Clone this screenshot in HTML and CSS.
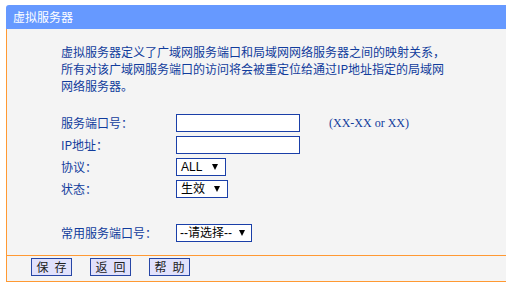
FILE: index.html
```html
<!DOCTYPE html>
<html lang="zh-CN">
<head>
<meta charset="utf-8">
<title>虚拟服务器</title>
<link rel="stylesheet" href="styles.css">
</head>
<body>
<div class="panel">
  <div class="title">虚拟服务器</div>
  <div class="content">
    <p class="intro">虚拟服务器定义了广域网服务端口和局域网网络服务器之间的映射关系，<br>所有对该广域网服务端口的访问将会被重定位给通过IP地址指定的局域网<br>网络服务器。</p>
    <div class="form">
      <div class="label">服务端口号：</div>
      <div class="field"><input class="text" type="text"><span class="hint">(XX-XX or XX)</span></div>
      <div class="label">IP地址：</div>
      <div class="field"><input class="text" type="text"></div>
      <div class="label">协议：</div>
      <div class="field"><div class="select w50"><span class="val">ALL</span><svg class="arrow" width="6" height="6" viewBox="0 0 6 6"><polygon points="0,0 6,0 3,6" fill="#000"/></svg></div></div>
      <div class="label">状态：</div>
      <div class="field"><div class="select w52"><span class="val">生效</span><svg class="arrow" width="6" height="6" viewBox="0 0 6 6"><polygon points="0,0 6,0 3,6" fill="#000"/></svg></div></div>
      <div class="spacer"></div>
      <div class="label">常用服务端口号：</div>
      <div class="field"><div class="select w76"><span class="val">--请选择--</span><svg class="arrow" width="6" height="6" viewBox="0 0 6 6"><polygon points="0,0 6,0 3,6" fill="#000"/></svg></div></div>
    </div>
  </div>
  <div class="footer">
    <button class="btn" type="button"><span>保</span><span>存</span></button>
    <button class="btn" type="button"><span>返</span><span>回</span></button>
    <button class="btn" type="button"><span>帮</span><span>助</span></button>
  </div>
</div>
</body>
</html>
```
FILE: styles.css
```css
html, body {
  margin: 0;
  padding: 0;
  background: #ffffff;
  overflow: hidden;
}

body {
  font-family: "Noto Sans CJK SC", "Liberation Sans", sans-serif;
  font-size: 12px;
  color: #113c9c;
}

.panel {
  margin: 5px 0 0 6px;
}

.title {
  height: 24px;
  line-height: 24px;
  background: #6699ff;
  color: #ffffff;
  border-top-left-radius: 3px;
  padding-left: 7px;
}

.content {
  box-sizing: border-box;
  height: 226px;
  background: #f4f4f4;
  border-left: 1px solid #ff9933;
  padding: 14px 0 0 54px;
}

.intro {
  margin: 0;
  line-height: 17px;
  white-space: nowrap;
}

.form {
  margin-top: 20px;
  display: grid;
  grid-template-columns: 115px auto;
  grid-auto-rows: 18px;
  row-gap: 4px;
  align-items: center;
}

.spacer {
  grid-column: 1 / 3;
}

.label {
  white-space: nowrap;
  line-height: 18px;
}

.field {
  display: flex;
  align-items: center;
  height: 18px;
}

.text {
  box-sizing: border-box;
  width: 124px;
  height: 18px;
  margin: 0;
  padding: 0 2px;
  border: 1px solid #1a3fa8;
  background: #ffffff;
  outline: none;
}

.hint {
  margin-left: 29px;
  font-family: "Liberation Serif", serif;
  font-size: 12px;
  color: #113c9c;
  white-space: pre;
}

.select {
  box-sizing: border-box;
  display: flex;
  align-items: center;
  height: 18px;
  border: 1px solid #1a3fa8;
  background: #ffffff;
  padding-left: 4px;
  padding-right: 7px;
  font-family: "Liberation Sans", "Noto Sans CJK SC", sans-serif;
  font-size: 12px;
  color: #000000;
}

.select .val {
  flex: 1;
  white-space: nowrap;
  line-height: 16px;
}

.w50 { width: 50px; }
.w52 { width: 52px; }
.w76 { width: 76px; padding-left: 3px; padding-right: 6px; }

.arrow {
  display: block;
  flex: none;
}

.footer {
  box-sizing: border-box;
  height: 27px;
  background: #f4f4f4;
  border-left: 1px solid #ff9933;
  border-top: 1px solid #ff9933;
  border-bottom: 1px solid #ff9933;
  padding: 2px 0 0 24px;
  display: flex;
  align-items: flex-start;
  gap: 18px;
}

.btn {
  box-sizing: border-box;
  width: 41px;
  height: 18px;
  margin: 0;
  padding: 0;
  border: 1px solid #2746a5;
  background: #e1e1fc;
  color: #222222;
  font-family: "Noto Sans CJK SC", sans-serif;
  font-size: 12px;
  display: flex;
  align-items: center;
  justify-content: center;
  gap: 6px;
  line-height: 16px;
}
```
